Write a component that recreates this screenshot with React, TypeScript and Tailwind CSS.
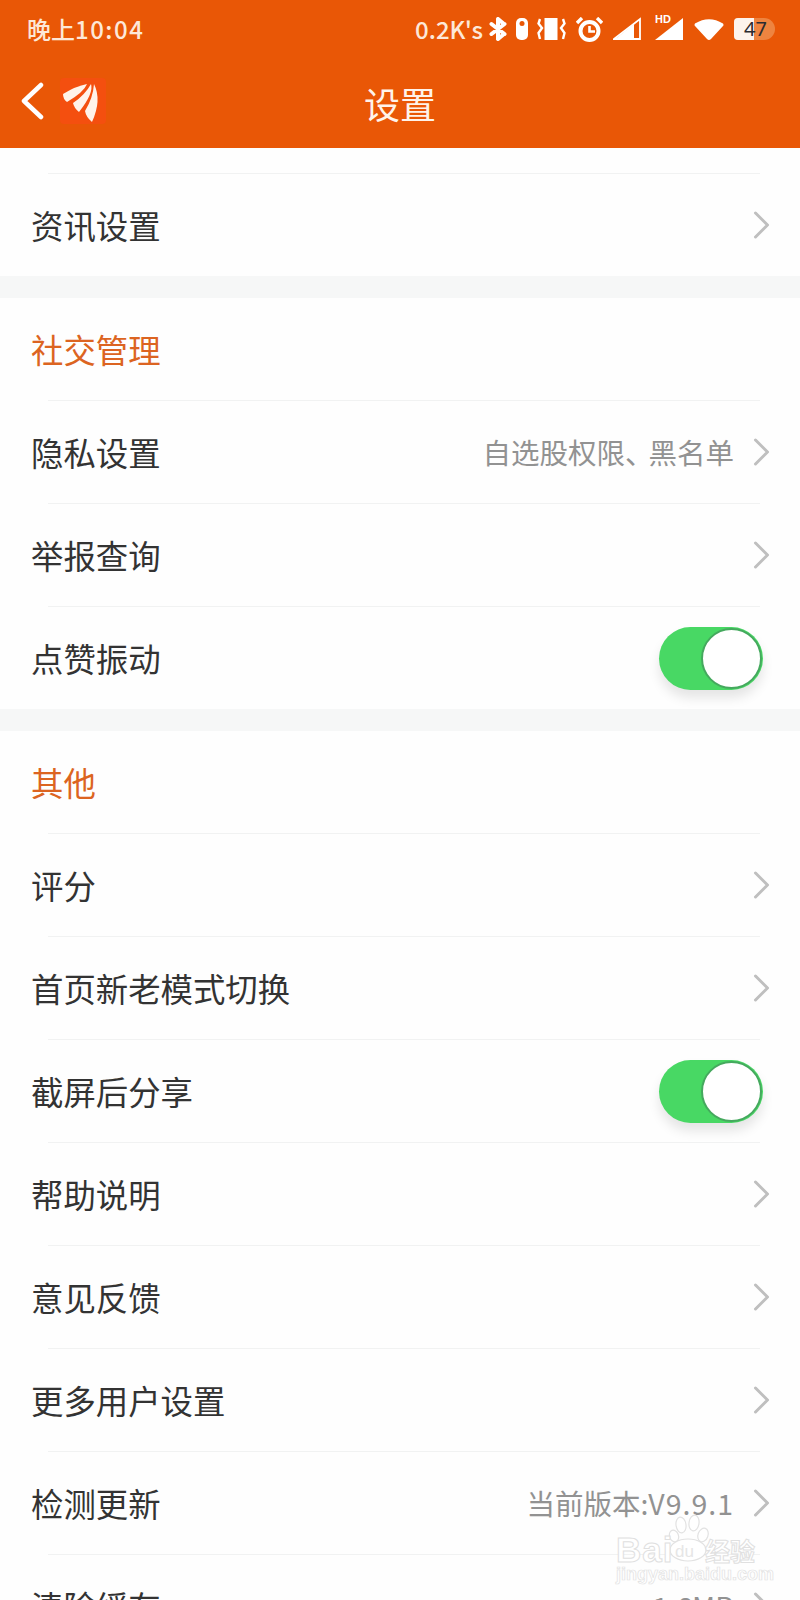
import React from 'react';

const font = { fontFamily: '"Noto Sans CJK SC", "Noto Sans", sans-serif' };
const latin = { fontFamily: '"Liberation Sans", sans-serif' };

function Chevron() {
    return (
        <svg width="17" height="28" viewBox="0 0 17 28" fill="none" stroke="#bfbfbf" strokeWidth="3" strokeLinecap="round" strokeLinejoin="round" className="shrink-0">
            <path d="M2.5 2 14.5 14 2.5 26" />
        </svg>
    );
}

function Toggle() {
    return (
        <div className="w-[104px] h-[63px] rounded-full bg-[#48d864] relative shadow-[0_8px_12px_rgba(0,0,0,0.1)] mr-[7px]">
            <div className="absolute right-[1px] top-[1px] w-[61px] h-[61px] rounded-full bg-white border-2 border-[#45a95e]" />
        </div>
    );
}

function Divider() {
    return <div className="h-px bg-[#f1f2f2] ml-[48px] mr-[40px]" />;
}

function Gap() {
    return <div className="h-[22px] bg-[#f6f7f7]" />;
}

function SectionTitle({ title }: { title: string }) {
    return (
        <div className="h-[102px] pl-[31px] flex items-center text-[32.4px] text-[#dc6421]">
            {title}
        </div>
    );
}

function Row({ label, value, on }: { label: string; value?: React.ReactNode; on?: boolean }) {
    return (
        <div className="h-[102px] pl-[31px] pr-[30px] flex items-center justify-between">
            <span className="text-[32.4px] text-[#333333]">{label}</span>
            {on ? (
                <Toggle />
            ) : (
                <div className="flex items-center">
                    {value && <span className="text-[28.5px] text-[#929292] mr-[19px]">{value}</span>}
                    <Chevron />
                </div>
            )}
        </div>
    );
}

function StatusIcons() {
    return (
        <div className="flex items-center text-white">
            <span className="text-[24px] font-medium text-[#fde8d8] mr-[6px]">0.2K's</span>
            {/* bluetooth */}
            <svg width="18" height="24" viewBox="0 0 18 24" fill="none" stroke="#fff" strokeWidth="4" strokeLinecap="round" className="mr-[9px]">
                <path d="M9 2v20M2.500 7l13 10M15.500 7l-13 10M9 2l6 5M9 22l6-5" />
            </svg>
            {/* capsule */}
            <svg width="12" height="22" viewBox="0 0 12 22" className="mr-[9px]">
                <rect width="12" height="22" rx="5" fill="#fff" />
                <rect x="3.500" y="3" width="5" height="5" rx="2.500" fill="#e95706" />
            </svg>
            {/* vibrate */}
            <svg width="29" height="24" viewBox="0 0 29 24" className="mr-[10px]">
                <rect x="7.500" y="1" width="13" height="22" fill="#fff" />
                <path d="M3 2 1.500 6.500 5 11 1.500 16 3 22M26 2l1.500 4.500L24 11l3.500 5L26 22" fill="none" stroke="#fff" strokeWidth="2.400" />
            </svg>
            {/* alarm */}
            <svg width="27" height="25" viewBox="0 0 27 25" className="mr-[10px]">
                <circle cx="13.500" cy="14" r="9" fill="none" stroke="#fff" strokeWidth="4" />
                <path d="M13.500 9v5.500H19" fill="none" stroke="#fff" strokeWidth="2.600" />
                <path d="M1 6l5-5M26 6l-5-5" stroke="#fff" strokeWidth="3.400" />
            </svg>
            {/* signal outlined */}
            <svg width="29" height="24" viewBox="0 0 29 24" className="mr-[13px]">
                <path d="M1 22 27 2v20z" fill="none" stroke="#fff" strokeWidth="1.800" />
                <path d="M1 23 21 7v16z" fill="#fff" />
            </svg>
            {/* signal HD */}
            <div className="relative w-[28px] h-[24px] mr-[11px]">
                <svg width="28" height="24" viewBox="0 0 28 24" className="absolute left-0 top-0">
                    <path d="M0 23 28 1v22z" fill="#fff" />
                </svg>
                <span className="absolute left-0 top-[-4px] text-[11px] leading-[12px] font-bold text-white" style={latin}>HD</span>
            </div>
            {/* wifi */}
            <svg width="30" height="24" viewBox="0 0 30 24" className="mr-[10px]">
                <path d="M1 6.500Q15-2 29 6.500 30 8 29 9L17 22q-2 2-4 0L1 9Q0 8 1 6.500z" fill="#fff" />
            </svg>
            {/* battery */}
            <div className="relative w-[41px] h-[22px] rounded-l-[4px] rounded-r-[11px] bg-[#ee8440] flex items-center">
                <div className="w-[20px] h-full rounded-l-[4px] bg-[#fdf3ec]" />
                <span className="absolute left-[10px] top-[-2px] text-[20px] leading-[26px] text-[#2b2b30]" style={{ fontFamily: '"Noto Sans", sans-serif' }}>47</span>
            </div>
        </div>
    );
}

function Watermark() {
    return (
        <div className="absolute left-[616px] top-[1512px] w-[142px] text-white pointer-events-none">
            <svg width="50" height="50" viewBox="0 0 50 50" fill="#fff" stroke="#e2e2e2" strokeWidth="1.200" className="absolute left-[48px] top-[2px]">
                <ellipse cx="10" cy="22" rx="4.500" ry="6" transform="rotate(-20 10 22)" />
                <ellipse cx="17" cy="11" rx="5" ry="8" transform="rotate(-8 17 11)" />
                <ellipse cx="30" cy="9" rx="5" ry="8" transform="rotate(8 30 9)" />
                <ellipse cx="39" cy="21" rx="5" ry="7" transform="rotate(20 39 21)" />
                <ellipse cx="24" cy="36" rx="18" ry="11" />
            </svg>
            <div className="relative flex items-center h-[28px] mt-[24px]" style={latin}>
                <span className="text-[35px] leading-[28px] tracking-[1px] font-bold [-webkit-text-stroke:1px_#e0e0e0]">Bai</span>
                <span className="absolute left-[59px] top-[4px] text-[17px] leading-[24px] text-[#e6e6e6]">du</span>
                <span className="absolute left-[89px] top-0 text-[25px] leading-[28px] font-bold [-webkit-text-stroke:1px_#e0e0e0]" style={font}>经验</span>
            </div>
            <div className="relative text-[18px] leading-[20px] font-bold whitespace-nowrap [-webkit-text-stroke:0.7px_#e2e2e2]" style={latin}>jingyan.baidu.com</div>
        </div>
    );
}

export default function App() {
    return (
        <div className="relative w-[800px] h-[1600px] overflow-hidden bg-[#fefefe]" style={font}>
            {/* Header */}
            <div className="h-[148px] bg-[#e95706]">
                <div className="h-[58px] pl-[27px] pr-[25px] flex items-center justify-between">
                    <span className="text-[24px] font-medium text-[#fde8d8]">晚上<span className="tracking-[1.500px]">10:04</span></span>
                    <StatusIcons />
                </div>
                <div className="relative h-[90px] flex items-center justify-center">
                    <span className="text-[36px] text-[#fff3ea]">设置</span>
                    <div className="absolute left-[20px] top-[20px] flex items-center">
                        <svg width="24" height="38" viewBox="0 0 24 38" fill="none" stroke="#fff" strokeWidth="4.500" strokeLinecap="round" strokeLinejoin="round">
                            <path d="M21 3 4 19l17 16" />
                        </svg>
                        <div className="ml-[16px] w-[46px] h-[46px] bg-[#f44f0f] rounded-[4px]">
                            <svg width="46" height="46" viewBox="0 0 46 46" fill="#fff3ea">
                                <path d="M3 16Q16 8 27 6 24 14 7 24 3 21 3 16z" />
                                <path d="M13 25Q25 17 31 6 34 15 19 34 14 30 13 25z" />
                                <path d="M25 33Q33 20 34 6 42 22 32 44 26 39 25 33z" />
                            </svg>
                        </div>
                    </div>
                </div>
            </div>

            {/* List */}
            <div className="h-[25px]" />
            <Divider />
            <Row label="资讯设置" />
            <Gap />
            <SectionTitle title="社交管理" />
            <Divider />
            <Row label="隐私设置" value={<>自选股权限<span className="tracking-[-5px]">、</span>黑名单</>} />
            <Divider />
            <Row label="举报查询" />
            <Divider />
            <Row label="点赞振动" on />
            <Gap />
            <SectionTitle title="其他" />
            <Divider />
            <Row label="评分" />
            <Divider />
            <Row label="首页新老模式切换" />
            <Divider />
            <Row label="截屏后分享" on />
            <Divider />
            <Row label="帮助说明" />
            <Divider />
            <Row label="意见反馈" />
            <Divider />
            <Row label="更多用户设置" />
            <Divider />
            <Row label="检测更新" value={<>当前版本:<span className="tracking-[1px]">V9.9.1</span></>} />
            <Divider />
            <Row label="清除缓存" value="1.6MB" />

            <Watermark />
        </div>
    );
}
